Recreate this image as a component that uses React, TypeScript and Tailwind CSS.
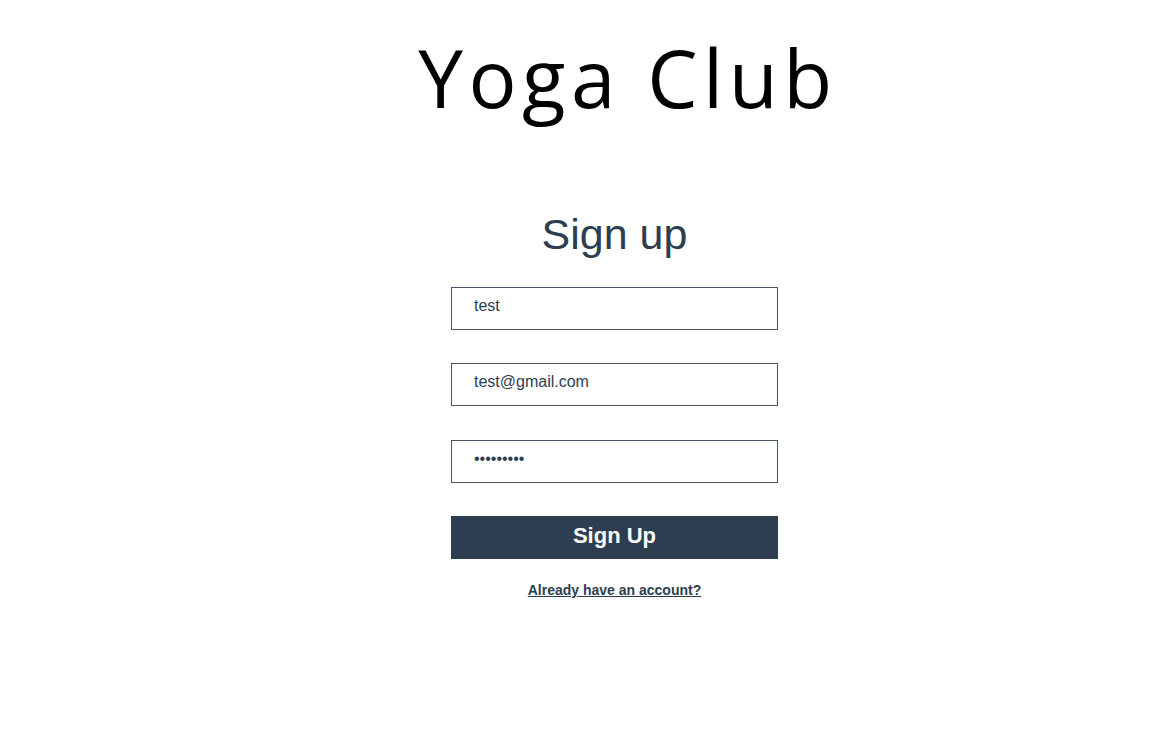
import React, { useState } from 'react';

export default function App() {
  const [name, setName] = useState('test');
  const [email, setEmail] = useState('test@gmail.com');
  const [password, setPassword] = useState('123456789');

  return (
    <div className="min-h-[752px] w-full bg-white">
      {/* Header */}
      <div className="pl-[102px] pt-[27px] text-center">
        <h1 className="font-['Open_Sans',sans-serif] text-[80px] font-normal leading-[100px] tracking-[5.5px] text-black">
          Yoga Club
        </h1>
      </div>

      {/* Sign up form */}
      <div className="flex flex-col items-center pl-[75px] pt-[83px] font-['Liberation_Sans',Arial,sans-serif]">
        <h2 className="text-[43px] leading-[48px] text-[#2c3e50]">Sign up</h2>
        <form className="mt-[29px] flex w-[327px] flex-col" onSubmit={(e) => e.preventDefault()}>
          <input
            type="text"
            value={name}
            onChange={(e) => setName(e.target.value)}
            className="h-[43px] w-full border border-[#4a5568] px-[22px] pb-[6px] text-[16px] text-[#2c3e50] outline-none"
          />
          <input
            type="email"
            value={email}
            onChange={(e) => setEmail(e.target.value)}
            className="mt-[33px] h-[43px] w-full border border-[#4a5568] px-[22px] pb-[6px] text-[16px] text-[#2c3e50] outline-none"
          />
          <input
            type="password"
            value={password}
            onChange={(e) => setPassword(e.target.value)}
            className="mt-[34px] h-[43px] w-full border border-[#4a5568] px-[22px] pb-[6px] text-[16px] text-[#2c3e50] outline-none"
          />
          <button
            type="submit"
            className="mt-[33px] h-[43px] w-full bg-[#2c3e50] pb-[5px] text-[22px] font-bold text-white"
          >
            Sign Up
          </button>
        </form>
        <a href="#" className="mt-[21px] text-[14px] font-bold text-[#2c3e50] underline">
          Already have an account?
        </a>
      </div>
    </div>
  );
}
